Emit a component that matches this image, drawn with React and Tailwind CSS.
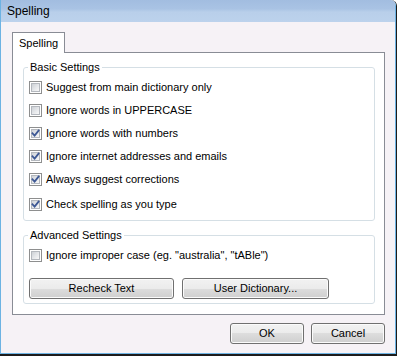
import React from "react";

const font = { fontFamily: '"Liberation Sans", Arial, sans-serif' };

function Check({ checked }) {
  return (
    <div className="w-[13px] h-[13px] border border-[#8e8f8f] bg-white p-[1px] shrink-0">
      <div className="relative w-full h-full border border-[#b4b8be] bg-[linear-gradient(135deg,#cdd1d6_0%,#e6e8eb_55%,#f8f8f8_100%)]">
        {checked && (
          <svg className="absolute left-[-1px] top-[-1px]" width="9" height="9" viewBox="0 0 9 9">
            <polyline points="1.5,4.3 3.6,6.6 7.6,1.6" fill="none" stroke="#3d5894" strokeWidth="1.8" strokeLinecap="square" />
          </svg>
        )}
      </div>
    </div>
  );
}

function Row({ label, checked, className = "" }) {
  return (
    <div className={"flex items-center h-[23px] gap-[4px] " + className}>
      <Check checked={checked} />
      <span className="text-[11px] leading-[13px] text-black">{label}</span>
    </div>
  );
}

function Btn({ children, className = "" }) {
  return (
    <button
      className={
        "h-[21px] rounded-[3px] border border-[#707070] text-[11px] text-black flex items-center justify-center shadow-[inset_0_0_0_1px_#fbfbfb] bg-[linear-gradient(to_bottom,#f2f2f2_0%,#ebebeb_50%,#dddddd_50%,#cfcfcf_100%)] " +
        className
      }
      style={font}
    >
      {children}
    </button>
  );
}

export default function App() {
  return (
    <div className="w-[397px] h-[356px] border-r border-b-2 border-[#1c1c1c] rounded-tr-[6px] overflow-hidden" style={font}>
      <div className="flex flex-col w-full h-full border-l border-r border-b border-[#6db3e3]">
        <div className="h-[22px] shrink-0 flex items-center pl-[6px] bg-[linear-gradient(to_bottom,#a2bde0_0%,#a9c3e4_40%,#b9cfea_55%,#bcd2ec_100%)]">
          <span className="text-[12px] leading-[14px] text-black">Spelling</span>
        </div>
        <div className="flex-1 bg-[#f6f2f6] pl-[11px] pt-[10px] flex flex-col">
          <div className="flex">
            <div className="relative z-10 h-[21px] -mb-px px-[6px] pt-[1px] bg-white border border-b-0 border-[#898c95] flex items-center">
              <span className="text-[11px] leading-[13px] text-black">Spelling</span>
            </div>
          </div>
          <div className="w-[373px] h-[263px] border border-[#898c95] bg-white pl-[10px] pt-[8px]">
            <fieldset className="w-[352px] border border-[#d5dfe5] rounded-[3px] px-[5px] pt-[2px] pb-[4px]">
              <legend className="text-[11px] leading-[13px] text-black px-[2px] -ml-[1px]">Basic Settings</legend>
              <Row label="Suggest from main dictionary only" checked={false} />
              <Row label="Ignore words in UPPERCASE" checked={false} />
              <Row label="Ignore words with numbers" checked />
              <Row label="Ignore internet addresses and emails" checked />
              <Row label="Always suggest corrections" checked />
              <Row label="Check spelling as you type" checked className="mt-[2px]" />
            </fieldset>
            <fieldset className="mt-[8px] w-[352px] border border-[#d5dfe5] rounded-[3px] px-[5px] pt-[2px] pb-[4px]">
              <legend className="text-[11px] leading-[13px] text-black px-[2px] -ml-[1px]">Advanced Settings</legend>
              <Row label={'Ignore improper case (eg. "australia", "tABle")'} checked={false} />
              <div className="flex gap-[8px] mt-[11px]">
                <Btn className="w-[145px]">Recheck Text</Btn>
                <Btn className="w-[147px]">User Dictionary...</Btn>
              </div>
            </fieldset>
          </div>
          <div className="flex justify-end gap-[7px] mt-[8px] w-[373px]">
            <Btn className="w-[74px]">OK</Btn>
            <Btn className="w-[74px]">Cancel</Btn>
          </div>
        </div>
      </div>
    </div>
  );
}
